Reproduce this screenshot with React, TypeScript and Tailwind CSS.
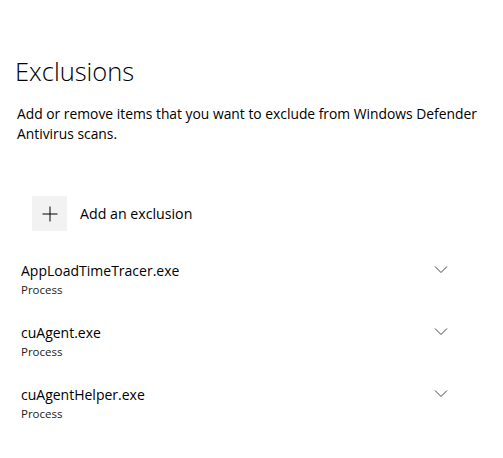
const items = ["AppLoadTimeTracer.exe", "cuAgent.exe", "cuAgentHelper.exe"];

function Chevron() {
  return (
    <svg aria-hidden width="14" height="8" viewBox="0 0 14 8" fill="none" className="mt-[5px] shrink-0">
      <path d="M1 0.5 7 6.5 13 0.5" stroke="#444" strokeWidth="1" />
    </svg>
  );
}

export default function App() {
  return (
    <div
      className="min-h-[458px] w-[503px] bg-white text-black"
      style={{ fontFamily: '"Open Sans", "Noto Sans", sans-serif' }}
    >
      <div className="pl-[15px] pt-[53px]">
        <h1 className="text-[25.5px] font-light leading-[36px]">Exclusions</h1>
      </div>

      <p className="mt-[15px] pl-[17px] pr-[8px] text-[13.85px] leading-[20px]">
        Add or remove items that you want to exclude from Windows Defender Antivirus scans.
      </p>

      {/* add button */}
      <div className="mt-[52px] flex items-center gap-[13px] pl-[32px]">
        <div className="flex h-[35px] w-[35px] items-center justify-center bg-[#f2f2f2]">
          <svg aria-hidden width="16" height="16" viewBox="0 0 16 16">
            <path d="M8 0.5v15M0.5 8h15" stroke="#000" strokeWidth="1" />
          </svg>
        </div>
        <span className="text-[14.2px] leading-[20px]">Add an exclusion</span>
      </div>

      <div className="mt-[30px] flex flex-col pl-[21px] pr-[55px]">
        {items.map((name) => (
          <div key={name} className="flex h-[62px] items-start justify-between">
            <div className="flex flex-col">
              <span className="text-[14px] leading-[19px]">{name}</span>
              <span className="mt-[2px] text-[11.5px] leading-[16px] text-[#222]">Process</span>
            </div>
            <Chevron />
          </div>
        ))}
      </div>
    </div>
  );
}
